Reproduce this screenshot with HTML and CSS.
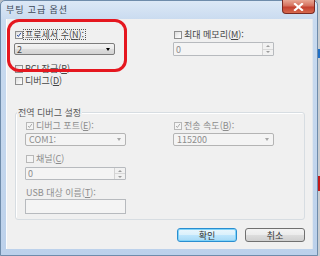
FILE: index.html
```html
<!DOCTYPE html>
<html lang="ko">
<head>
<meta charset="utf-8">
<title>부팅 고급 옵션</title>
<link rel="stylesheet" href="styles.css">
</head>
<body>
<div class="desktop">
  <div class="window">
    <div class="titlebar">
      <span class="title">부팅 고급 옵션</span>
      <div class="close">
        <svg width="11" height="8" viewBox="0 0 11 8"><path d="M2 1 L9 7 M9 1 L2 7" stroke="#fff" stroke-width="2.2" stroke-linecap="square"/></svg>
      </div>
    </div>
    <div class="client">
      <div class="top">
        <div class="col">
          <div class="check">
            <span class="box"><svg class="tick" viewBox="0 0 8 8"><path d="M1.5 4 L3.2 6 L6.5 1.2" fill="none" stroke="#2b4ea3" stroke-width="1.3"/></svg></span>
            <span class="lbl focus">프로세서 수(<u>N</u>):</span>
          </div>
          <div class="combo">
            <span class="val">2</span>
            <span class="arrow"></span>
          </div>
          <div class="check pci">
            <span class="box"></span>
            <span class="lbl">PCI 잠금(<u>P</u>)</span>
          </div>
          <div class="check dbg">
            <span class="box"></span>
            <span class="lbl">디버그(<u>D</u>)</span>
          </div>
        </div>
        <div class="col">
          <div class="check">
            <span class="box"></span>
            <span class="lbl">최대 메모리(<u>M</u>):</span>
          </div>
          <div class="spin dis top-spin">
            <span class="val">0</span>
            <span class="spinbtn"><span class="up"></span><span class="down"></span></span>
          </div>
        </div>
      </div>

      <div class="group">
        <span class="group-title">전역 디버그 설정</span>
        <div class="grow">
          <div class="col">
            <div class="check dis">
              <span class="box"><svg class="tick" viewBox="0 0 8 8"><path d="M1.5 4 L3.2 6 L6.5 1.2" fill="none" stroke="#a2a2a2" stroke-width="1.2"/></svg></span>
              <span class="lbl">디버그 포트(<u>E</u>):</span>
            </div>
            <div class="combo dis">
              <span class="val">COM1:</span>
              <span class="arrow"></span>
            </div>
            <div class="check dis chan">
              <span class="box"></span>
              <span class="lbl">채널(<u>C</u>)</span>
            </div>
            <div class="spin dis g-spin">
              <span class="val">0</span>
              <span class="spinbtn"><span class="up"></span><span class="down"></span></span>
            </div>
            <div class="plain dis usb">USB 대상 이름(<u>T</u>):</div>
            <div class="input dis"></div>
          </div>
          <div class="col">
            <div class="check dis">
              <span class="box"><svg class="tick" viewBox="0 0 8 8"><path d="M1.5 4 L3.2 6 L6.5 1.2" fill="none" stroke="#a2a2a2" stroke-width="1.2"/></svg></span>
              <span class="lbl">전송 속도(<u>B</u>):</span>
            </div>
            <div class="combo dis">
              <span class="val">115200</span>
              <span class="arrow"></span>
            </div>
          </div>
        </div>
      </div>

      <div class="buttons">
        <div class="btn default">확인</div>
        <div class="btn">취소</div>
      </div>
    </div>
  </div>
  <div class="strip">
    <div class="s1"></div>
    <div class="s2"></div>
    <div class="s3"></div>
    <div class="s4"></div>
    <div class="s5"></div>
  </div>
</div>
<div class="annot"></div>
</body>
</html>
```
FILE: styles.css
```css
* { box-sizing: border-box; }
html, body { margin: 0; padding: 0; }
body {
  width: 320px;
  height: 256px;
  overflow: hidden;
  position: relative;
  font-family: "Noto Sans CJK KR", "Noto Sans", sans-serif;
  font-size: 9px;
  line-height: 1;
  color: #454545;
  background: #b9bec4;
}
.desktop { display: flex; width: 320px; height: 256px; }

.window {
  width: 318px;
  height: 256px;
  flex: none;
  display: flex;
  flex-direction: column;
  background: linear-gradient(#dce8f6, #c8daef 20px, #c3d6ed 60%, #bcd1eb);
  border: 1px solid #6f8cab;
  border-radius: 5px 5px 0 0;
  padding: 0 4px 6px 5px;
}
.titlebar {
  height: 18px;
  display: flex;
  align-items: flex-start;
  justify-content: space-between;
}
.title {
  padding-top: 4px;
  color: #3c4756;
  letter-spacing: 0.9px;
}
.close {
  width: 33px;
  height: 14px;
  margin: -1px -2px 0 0;
  border: 1px solid #7a2a22;
  border-top: none;
  border-radius: 0 0 4px 4px;
  background: linear-gradient(#e9a794, #d5705d 45%, #c4402f 55%, #d66a4e);
  display: flex;
  align-items: center;
  justify-content: center;
}
.close svg { display: block; }

.client {
  height: 230px;
  background: #f0f0f0;
  display: flex;
  flex-direction: column;
  box-shadow: inset 1px 0 0 #fbfcfd, inset -1px 0 0 #e2e8ee;
}

.top {
  display: flex;
  gap: 57px;
  padding: 11px 0 0 8px;
}
.col {
  width: 102px;
  display: flex;
  flex-direction: column;
}

.check {
  display: flex;
  align-items: center;
  height: 9px;
  padding-left: 1px;
  white-space: nowrap;
}
.box {
  width: 8px;
  height: 8px;
  flex: none;
  border: 1px solid #8f8f8f;
  background: linear-gradient(135deg, #dcdcdc, #f6f6f6 70%, #ffffff);
  margin-right: 1px;
  display: flex;
  align-items: center;
  justify-content: center;
}
.tick { width: 8px; height: 8px; display: block; }
.lbl { padding: 0 1px; }
.focus { outline: 1px dotted #555; outline-offset: 0; }
u { text-decoration: underline; text-underline-offset: 1px; }

.dis { color: #8d8d8d; }
.check.dis .box { border-color: #b8b8b8; background: #f4f4f4; }

.combo {
  width: 101px;
  height: 12px;
  margin-top: 4px;
  border: 1px solid #7c7c7c;
  border-radius: 2px;
  background: linear-gradient(#f3f3f3 0, #ebebeb 50%, #dddddd 51%, #d3d3d3 100%);
  display: flex;
  align-items: center;
  justify-content: space-between;
  padding: 0 4px 0 2px;
}
.arrow {
  width: 0;
  height: 0;
  border-left: 2.5px solid transparent;
  border-right: 2.5px solid transparent;
  border-top: 3px solid #000;
}
.combo.dis {
  height: 13px;
  margin-top: 3px;
  border-color: #b4b4b4;
  background: #f4f4f4;
  padding-left: 3px;
}
.combo.dis .arrow { border-top-color: #a6a6a6; }

.pci { margin-top: 9px; }
.dbg { margin-top: 3px; }

.spin {
  width: 101px;
  height: 13px;
  border: 1px solid #b7babe;
  border-radius: 1px;
  background: #f4f4f4;
  display: flex;
  align-items: center;
  justify-content: space-between;
  padding-left: 2px;
}
.top-spin { margin-top: 3px; height: 14px; }
.spinbtn {
  width: 11px;
  height: 100%;
  display: flex;
  flex-direction: column;
  border-left: 1px solid #d3d3d3;
}
.spinbtn span {
  flex: 1;
  display: flex;
  align-items: center;
  justify-content: center;
  background: #f1f1f1;
}
.spinbtn .up { border-bottom: 1px solid #d8d8d8; }
.spinbtn .up::after {
  content: "";
  border-left: 2px solid transparent;
  border-right: 2px solid transparent;
  border-bottom: 2px solid #9c9c9c;
}
.spinbtn .down::after {
  content: "";
  border-left: 2px solid transparent;
  border-right: 2px solid transparent;
  border-top: 2px solid #9c9c9c;
}

.group {
  position: relative;
  margin: 27px 8px 0 9px;
  border: 1px solid #d7dde2;
  border-radius: 3px;
  padding: 8px 0 5px 9px;
  box-shadow: inset 1px 1px 0 #fff;
}
.group-title {
  position: absolute;
  top: -5px;
  left: 1px;
  padding: 0 1px;
  background: #f0f0f0;
  color: #555;
}
.grow {
  display: flex;
  gap: 46px;
}
.chan { margin-top: 8px; }
.g-spin { margin-top: 4px; }
.plain { height: 9px; margin-top: 8px; white-space: nowrap; padding-left: 1px; }
.input {
  width: 101px;
  height: 15px;
  margin-top: 2px;
  border: 1px solid #b7babe;
  background: #f4f4f4;
}

.buttons {
  display: flex;
  justify-content: flex-end;
  gap: 8px;
  margin-top: 8px;
  padding-right: 8px;
}
.btn {
  width: 60px;
  height: 14px;
  border: 1px solid #707070;
  border-radius: 3px;
  background: linear-gradient(#f3f3f3, #ebebeb 50%, #dddddd 51%, #cfcfcf);
  display: flex;
  align-items: center;
  justify-content: center;
  color: #333;
}
.btn.default {
  border-color: #2a8ed0;
  box-shadow: inset 0 0 0 1px #7fd3f9;
  background: linear-gradient(#eaf6fd, #d9f0fc 50%, #bee6fd 51%, #a7d9f5);
}

.strip {
  width: 2px;
  display: flex;
  flex-direction: column;
}
.s1 { height: 49px; background: #c9cdd1; }
.s2 { height: 9px; background: #1f6fc6; }
.s3 { height: 118px; background: #c9cdd1; }
.s4 { height: 15px; background: #c21a1a; }
.s5 { flex: 1; background: #c9cdd1; }

.annot {
  position: absolute;
  left: 7px;
  top: 19px;
  width: 120px;
  height: 53px;
  border: 3px solid #e5171f;
  border-radius: 12px;
}
```
